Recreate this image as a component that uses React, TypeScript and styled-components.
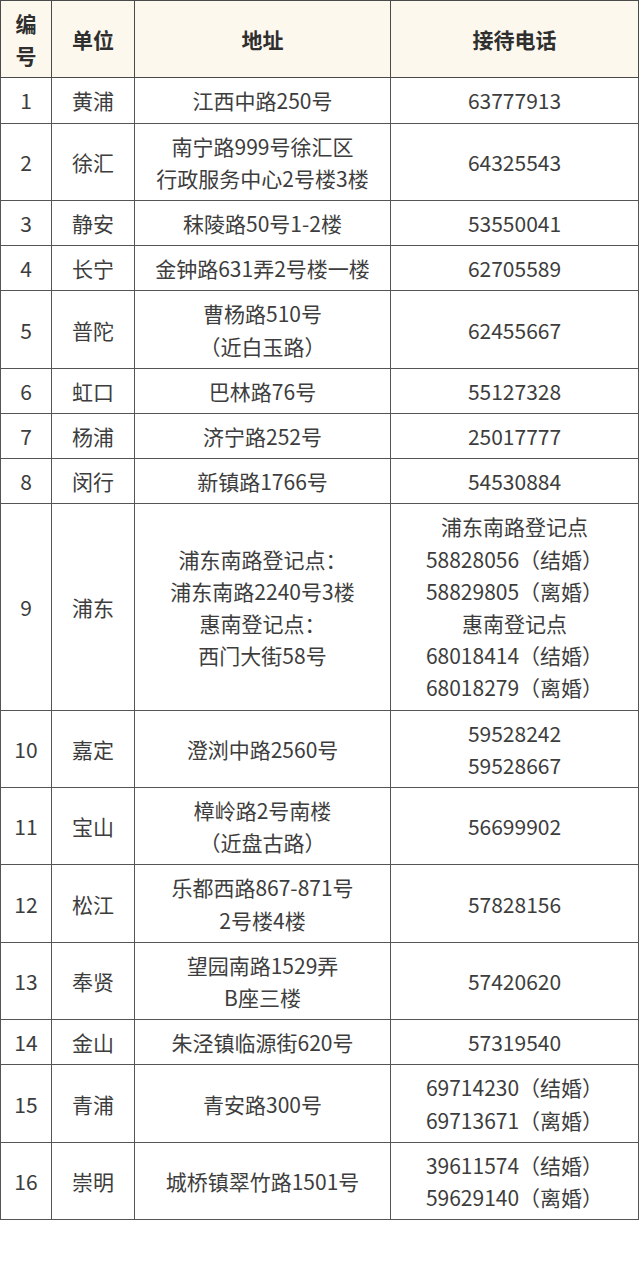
import styled, { createGlobalStyle } from "styled-components";

const GlobalStyle = createGlobalStyle`
  html, body {
    margin: 0;
    padding: 0;
    background: #ffffff;
  }
  body {
    font-family: "Noto Sans CJK SC", "Noto Sans", sans-serif;
  }
`;

type Office = {
  no: number;
  unit: string;
  address: string[];
  phone: string[];
};

const offices: Office[] = [
  { no: 1, unit: "黄浦", address: ["江西中路250号"], phone: ["63777913"] },
  {
    no: 2,
    unit: "徐汇",
    address: ["南宁路999号徐汇区", "行政服务中心2号楼3楼"],
    phone: ["64325543"],
  },
  { no: 3, unit: "静安", address: ["秣陵路50号1-2楼"], phone: ["53550041"] },
  { no: 4, unit: "长宁", address: ["金钟路631弄2号楼一楼"], phone: ["62705589"] },
  {
    no: 5,
    unit: "普陀",
    address: ["曹杨路510号", "（近白玉路）"],
    phone: ["62455667"],
  },
  { no: 6, unit: "虹口", address: ["巴林路76号"], phone: ["55127328"] },
  { no: 7, unit: "杨浦", address: ["济宁路252号"], phone: ["25017777"] },
  { no: 8, unit: "闵行", address: ["新镇路1766号"], phone: ["54530884"] },
  {
    no: 9,
    unit: "浦东",
    address: ["浦东南路登记点：", "浦东南路2240号3楼", "惠南登记点：", "西门大街58号"],
    phone: [
      "浦东南路登记点",
      "58828056（结婚）",
      "58829805（离婚）",
      "惠南登记点",
      "68018414（结婚）",
      "68018279（离婚）",
    ],
  },
  {
    no: 10,
    unit: "嘉定",
    address: ["澄浏中路2560号"],
    phone: ["59528242", "59528667"],
  },
  {
    no: 11,
    unit: "宝山",
    address: ["樟岭路2号南楼", "（近盘古路）"],
    phone: ["56699902"],
  },
  {
    no: 12,
    unit: "松江",
    address: ["乐都西路867-871号", "2号楼4楼"],
    phone: ["57828156"],
  },
  {
    no: 13,
    unit: "奉贤",
    address: ["望园南路1529弄", "B座三楼"],
    phone: ["57420620"],
  },
  { no: 14, unit: "金山", address: ["朱泾镇临源街620号"], phone: ["57319540"] },
  {
    no: 15,
    unit: "青浦",
    address: ["青安路300号"],
    phone: ["69714230（结婚）", "69713671（离婚）"],
  },
  {
    no: 16,
    unit: "崇明",
    address: ["城桥镇翠竹路1501号"],
    phone: ["39611574（结婚）", "59629140（离婚）"],
  },
];

const Page = styled.div`
  width: 640px;
  min-height: 1265px;
  background: #ffffff;
`;

const Table = styled.table`
  width: 639px;
  border-collapse: collapse;
  table-layout: fixed;
  font-size: 21px;
  line-height: 32.2px;
  color: #3d3d3d;
`;

const HeadCell = styled.th`
  background: #fdf8ee;
  color: #2f2f2f;
  font-weight: 700;
  border: 1px solid #4a4a4a;
  padding: 6px 2px;
  text-align: center;
  vertical-align: middle;
`;

const Cell = styled.td`
  border: 1px solid #555555;
  padding: 6px 2px;
  text-align: center;
  vertical-align: middle;
  white-space: nowrap;
`;

const Line = styled.div`
  display: block;
`;

const Lines = ({ items }: { items: string[] }) => (
  <>
    {items.map((t, i) => (
      <Line key={i}>{t}</Line>
    ))}
  </>
);

export default function App() {
  return (
    <Page>
      <GlobalStyle />
      <Table>
        <colgroup>
          <col style={{ width: 51 }} />
          <col style={{ width: 83 }} />
          <col style={{ width: 256 }} />
          <col />
        </colgroup>
        <thead>
          <tr>
            <HeadCell>
              <Line>编</Line>
              <Line>号</Line>
            </HeadCell>
            <HeadCell>单位</HeadCell>
            <HeadCell>地址</HeadCell>
            <HeadCell>接待电话</HeadCell>
          </tr>
        </thead>
        <tbody>
          {offices.map((o) => (
            <tr key={o.no}>
              <Cell>{o.no}</Cell>
              <Cell>{o.unit}</Cell>
              <Cell>
                <Lines items={o.address} />
              </Cell>
              <Cell>
                <Lines items={o.phone} />
              </Cell>
            </tr>
          ))}
        </tbody>
      </Table>
    </Page>
  );
}
